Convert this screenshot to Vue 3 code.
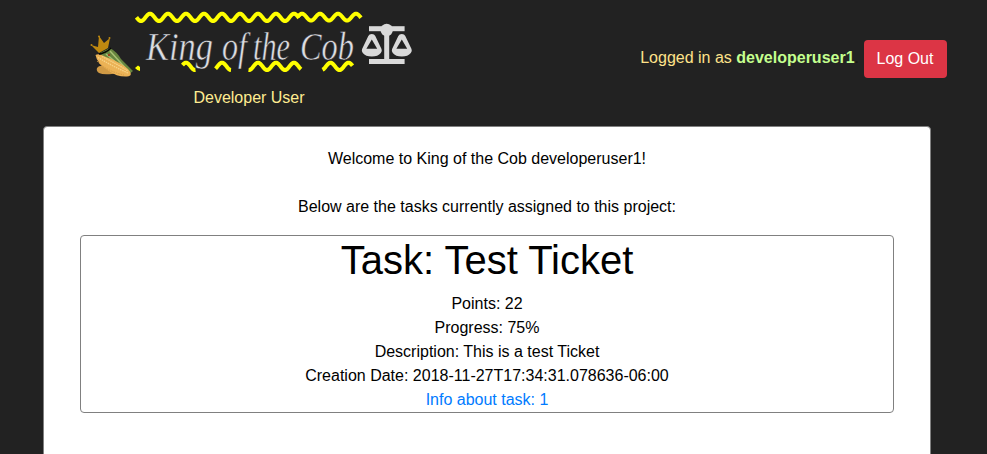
<script setup>
const wave = (start, end, peak, top, bottom) => {
  const mid = (top + bottom) / 2
  const amp = (bottom - top) / 2
  let d = ''
  for (let x = start; x <= end; x += 0.5) {
    const y = mid - amp * Math.cos(((x - peak) * Math.PI * 2) / 18)
    d += `${d ? 'L' : 'M'}${x} ${y.toFixed(2)}`
  }
  return d
}

const waves = [
  wave(136.5, 299, 150, 13.7, 21),
  wave(298, 361, 302, 13.7, 20.6),
  wave(182.5, 195.5, 186, 62.7, 70),
  wave(215.5, 231, 222, 62.7, 70),
  wave(248.5, 301, 258, 62.7, 70),
  wave(322.5, 352.5, 330.5, 62.7, 70),
]

const title = [
  { text: 'King', x: 146, width: 67 },
  { text: 'of', x: 222, width: 25 },
  { text: 'the', x: 253, width: 37 },
  { text: 'Cob', x: 300, width: 54 },
]

const user = 'developeruser1'
const task = {
  id: 1,
  name: 'Test Ticket',
  rows: [
    'Points: 22',
    'Progress: 75%',
    'Description: This is a test Ticket',
    'Creation Date: 2018-11-27T17:34:31.078636-06:00',
  ],
}
</script>

<template>
  <div class="page">
    <header class="header">
      <div class="brand">
        <svg class="logo" width="340" height="85" viewBox="80 0 340 85">
          <!-- crowned corn cobs -->
          <g>
            <path d="M97 68Q99 65 104 66L116 71Q117 74 112 74Q103 75 99 73Q96 71 97 68Z" fill="#d09a45" />
            <path d="M100 53L110 48Q117 52 121 59L133 71L127 76L112 66Z" fill="#66853f" />
            <path d="M110 51L129 72M106 54L124 69" stroke="#a9c173" stroke-width="1.5" fill="none" />
            <path d="M95.5 55Q99 53 106 57Q120 62 128 69Q134 76 127 76.5Q117 77 109 71Q97 64 95.5 55Z" fill="#ebb256" />
            <path d="M98 57.5Q112 66 128 73M102 56.5Q117 64 128 71" stroke="#f7d488" stroke-width="1.3" stroke-dasharray="1.5 .8" fill="none" />
            <path d="M97 61Q106 71 124 75" stroke="#d49b42" stroke-width="1" stroke-dasharray="1.5 1" fill="none" />
            <path d="M91 45L98 47L99 36L104 43L110 38L108 48L99 53Z" fill="#bf8910" />
            <path d="M99 54Q106 53 111 48" stroke="#090a05" stroke-width="1.6" fill="none" />
            <circle cx="91.5" cy="45" r="1" fill="#bf8910" />
            <circle cx="99" cy="36.5" r="1" fill="#bf8910" />
            <circle cx="109.5" cy="38" r="1" fill="#bf8910" />
            <circle cx="109" cy="55" r="1.2" fill="#984021" />
          </g>
          <path v-for="(d, i) in waves" :key="i" :d="d" class="wave" />
          <path d="M135 68L138 65.5L140 67V71Q137.5 71 135 68Z" fill="#ff0" />
          <text
            v-for="word in title"
            :key="word.text"
            :x="word.x"
            y="60"
            :textLength="word.width"
            lengthAdjust="spacingAndGlyphs"
            class="title"
          >{{ word.text }}</text>
          <!-- scales -->
          <g fill="#d9d9d9">
            <rect x="369" y="26.2" width="35.6" height="5" />
            <circle cx="386.7" cy="30" r="6.2" />
            <rect x="384.2" y="30" width="5" height="30" />
            <rect x="369" y="59" width="35.6" height="5" />
            <path fill-rule="evenodd" d="M368.3 36Q369.2 34 371.8 34Q374.4 34 375.3 36L381.5 49Q382.4 51 380.8 53Q378 56.5 371.8 56.5Q365.6 56.5 362.8 53Q361.2 51 362.1 49ZM371.8 39.5L366.4 48.7H377.2Z" />
            <path fill-rule="evenodd" d="M398.3 36Q399.2 34 401.8 34Q404.4 34 405.3 36L411.5 49Q412.4 51 410.8 53Q408 56.5 401.8 56.5Q395.6 56.5 392.8 53Q391.2 51 392.1 49ZM401.8 39.5L396.4 48.7H407.2Z" />
          </g>
        </svg>
        <div class="role">Developer User</div>
      </div>
      <div class="session">
        <span class="status">Logged in as <strong>{{ user }}</strong><span class="stop">.</span></span>
        <button class="logout" type="button">Log Out</button>
      </div>
    </header>
    <main class="card">
      <p class="line">Welcome to King of the Cob {{ user }}!</p>
      <p class="line">Below are the tasks currently assigned to this project:</p>
      <section class="task">
        <h1>Task: {{ task.name }}</h1>
        <div v-for="row in task.rows" :key="row">{{ row }}</div>
        <a href="#">Info about task: {{ task.id }}</a>
      </section>
    </main>
  </div>
</template>

<style>
body {
  margin: 0;
  background: #222;
}
</style>

<style scoped>
.page {
  box-sizing: border-box;
  height: 454px;
  overflow: hidden;
  background: #222;
  color: #000;
  font: 16px/24px "Liberation Sans", Arial, sans-serif;
}
.header {
  display: flex;
  justify-content: space-between;
  align-items: flex-start;
  height: 126px;
  padding: 0 40px 0 80px;
}
.brand {
  width: 340px;
}
.logo {
  display: block;
}
.wave {
  fill: none;
  stroke: #ff0;
  stroke-width: 4;
}
.title {
  font: italic 40px "Liberation Serif", serif;
  fill: #dcdde2;
  stroke: #222;
  stroke-width: 0.5;
}
.role {
  width: 338px;
  padding-top: 1px;
  text-align: center;
  color: #ffec91;
}
.session {
  display: flex;
  align-items: flex-start;
  padding-top: 40px;
}
.status {
  padding: 6px 5px 0 0;
  color: #ffe28a;
}
.status strong {
  color: #c4ff8e;
}
.stop {
  color: #151515;
}
.logout {
  box-sizing: border-box;
  width: 83px;
  height: 38px;
  padding: 0 1px 0 0;
  border: 0;
  border-radius: 4px;
  background: #dc3545;
  color: #fff;
  font: inherit;
}
.card {
  box-sizing: border-box;
  width: 888px;
  height: 360px;
  margin-left: 43px;
  padding: 20px 36px;
  border: 1px solid #808080;
  border-radius: 4px;
  background: #fff;
  text-align: center;
}
.line {
  margin: 0 0 24px;
}
.line + .line {
  margin-bottom: 16px;
}
.task {
  border: 1px solid #808080;
  border-radius: 4px;
}
h1 {
  margin: 0 0 8px;
  font-size: 40px;
  font-weight: 400;
  line-height: 48px;
}
a {
  display: block;
  color: #007bff;
  text-decoration: none;
}
</style>
